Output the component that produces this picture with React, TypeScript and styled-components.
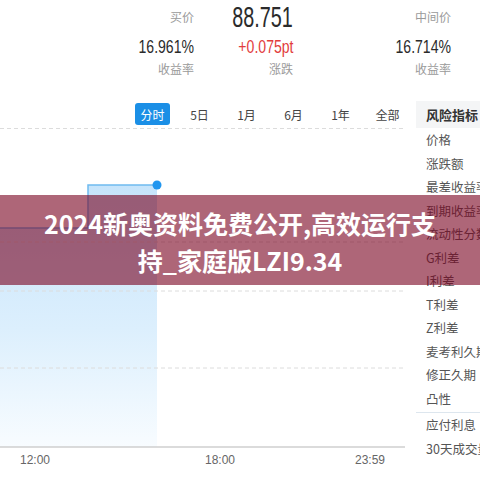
import React from "react";
import styled, { createGlobalStyle } from "styled-components";

const GlobalStyle = createGlobalStyle`
	html, body {
		margin: 0;
		padding: 0;
		background: #fff;
	}
	body {
		font-family: "Noto Sans CJK SC", "Noto Sans", sans-serif;
	}
`;

const Page = styled.div`
	position: relative;
	width: 480px;
	height: 480px;
	overflow: hidden;
	background: #fff;
`;

const Stats = styled.div`
	display: grid;
	grid-template-columns: 194px 99px 158px;
	grid-template-rows: 33px 28px 16px;
	justify-items: end;
	align-items: center;
	height: 100px;
	box-sizing: border-box;
`;

const Label = styled.span`
	font-size: 12px;
	line-height: 16px;
	color: #9a9a9a;
`;

// condensed figures, like the DIN-style digits of the quote
const Value = styled.span<{ $big?: boolean; $up?: boolean }>`
	display: inline-block;
	font-family: "Liberation Sans", Arial, sans-serif;
	font-size: ${p => (p.$big ? "30px" : "19px")};
	line-height: ${p => (p.$big ? "33px" : "22px")};
	color: ${p => (p.$up ? "#e23c3c" : "#2b2b2b")};
	transform: scaleX(${p => (p.$big ? 0.66 : 0.74)});
	transform-origin: right center;
`;

const Body = styled.div`
	display: flex;
	height: 380px;
`;

const Main = styled.div`
	width: 416px;
	display: flex;
	flex-direction: column;
`;

const Tabs = styled.div`
	display: flex;
	justify-content: flex-end;
	align-items: center;
	gap: 12px;
	height: 28px;
	padding-right: 11px;
`;

const Tab = styled.div<{ $active?: boolean }>`
	width: 35px;
	height: 22px;
	border-radius: 3px;
	display: flex;
	align-items: center;
	justify-content: center;
	font-size: 12px;
	color: ${p => (p.$active ? "#fff" : "#444")};
	background: ${p => (p.$active ? "#1b8fe6" : "transparent")};
`;

const Chart = styled.svg`
	display: block;
	width: 416px;
	height: 320px;
`;

const Axis = styled.div`
	display: grid;
	grid-template-columns: 185px 150px 81px;
	height: 32px;
	font-size: 12px;
	color: #666;
	line-height: 24px;
	padding-left: 20px;
	font-family: "Liberation Sans", sans-serif;
`;

const Panel = styled.div`
	width: 64px;
	flex: none;
	white-space: nowrap;
	overflow: hidden;
`;

const PanelHead = styled.div`
	height: 27px;
	margin-top: 1px;
	background: #f4f5f6;
	padding-left: 10px;
	font-size: 13px;
	font-weight: 700;
	color: #333;
	line-height: 27px;
`;

const Item = styled.div<{ $sep?: boolean }>`
	height: 23.5px;
	line-height: 23.5px;
	padding-left: 10px;
	font-size: 12.5px;
	color: #555;
	border-top: ${p => (p.$sep ? "1px solid #dde6ee" : "none")};
	margin-top: ${p => (p.$sep ? "2px" : "0")};
`;

const Banner = styled.div`
	position: absolute;
	left: 0;
	right: 0;
	top: 195px;
	height: 90px;
	background: rgba(120, 0, 30, 0.6);
	display: flex;
	align-items: center;
	justify-content: center;
	text-align: center;
	padding-top: 3px;
	box-sizing: border-box;
`;

const BannerText = styled.div`
	width: 400px;
	color: #fff;
	font-size: 25px;
	font-weight: 700;
	line-height: 37px;
	font-family: "Noto Sans CJK SC", "Noto Sans", sans-serif;
`;

const tabs = ["分时", "5日", "1月", "6月", "1年", "全部"];
const items = [
	"价格",
	"涨跌额",
	"最差收益率",
	"到期收益率",
	"流动性分数",
	"G利差",
	"I利差",
	"T利差",
	"Z利差",
	"麦考利久期",
	"修正久期",
	"凸性",
];

const App = () => {
	return (
		<Page>
			<GlobalStyle />
			<Stats>
				<Label>买价</Label>
				<Value $big>88.751</Value>
				<Label>中间价</Label>
				<Value>16.961%</Value>
				<Value $up>+0.075pt</Value>
				<Value>16.714%</Value>
				<Label>收益率</Label>
				<Label>涨跌</Label>
				<Label>收益率</Label>
			</Stats>
			<Body>
				<Main>
					<Tabs>
						{tabs.map((t, i) => (
							<Tab key={t} $active={i === 0}>
								{t}
							</Tab>
						))}
					</Tabs>
					<Chart viewBox="0 0 416 320">
						<defs>
							<linearGradient id="fill" x1="0" y1="0" x2="0" y2="1">
								<stop offset="0" stopColor="#c6e4fb" />
								<stop offset="0.55" stopColor="#dcefFd" />
								<stop offset="1" stopColor="#f8fcff" />
							</linearGradient>
						</defs>
						<path d="M0 100 H88 V57 H157 V319 H0 Z" fill="url(#fill)" />
						{[0.5, 114, 163, 240].map(y => (
							<line
								key={y}
								x1="0"
								x2="405"
								y1={y}
								y2={y}
								stroke="#dcdcdc"
								strokeDasharray="4 3"
							/>
						))}
						<path d="M0 100 H88 V57 H157" fill="none" stroke="#6fbaf0" strokeWidth="1.5" />
						<circle cx="157" cy="57" r="4.5" fill="#2196ef" />
						<line x1="0" x2="405" y1="319" y2="319" stroke="#cfcfcf" strokeWidth="1.5" />
					</Chart>
					<Axis>
						<span>12:00</span>
						<span>18:00</span>
						<span>23:59</span>
					</Axis>
				</Main>
				<Panel>
					<PanelHead>风险指标</PanelHead>
					{items.map(t => (
						<Item key={t}>{t}</Item>
					))}
					<Item $sep>应付利息</Item>
					<Item>30天成交量</Item>
				</Panel>
			</Body>
			<Banner>
				<BannerText>2024新奥资料免费公开,高效运行支持_家庭版LZI9.34</BannerText>
			</Banner>
		</Page>
	);
};

export default App;
